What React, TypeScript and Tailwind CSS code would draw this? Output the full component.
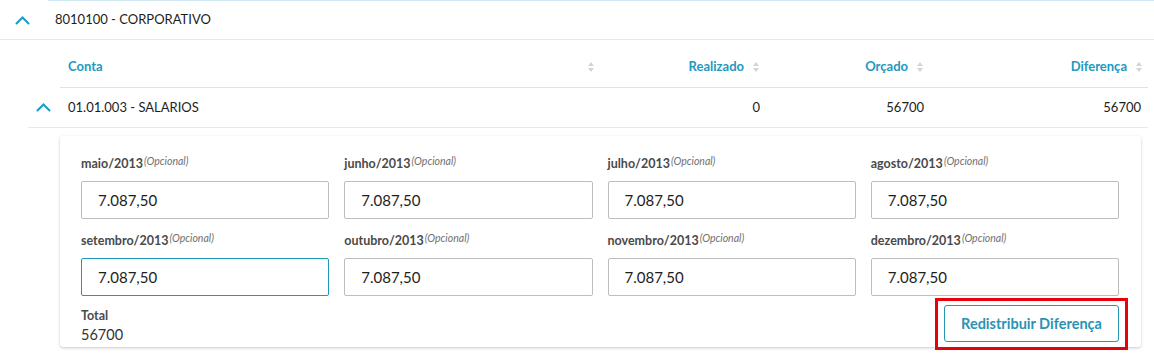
import React from "react";

const Chevron = () => (
  <svg width="15" height="9" viewBox="0 0 15 9" fill="none">
    <path d="M1.5 7.5 L7.5 1.5 L13.5 7.5" stroke="#1a9bc7" strokeWidth="2" strokeLinecap="round" strokeLinejoin="miter" />
  </svg>
);

const Sort = () => (
  <svg width="6" height="10" viewBox="0 0 6 10" className="shrink-0">
    <path d="M3 0 L6 4 L0 4 Z" fill="#d4d4d4" />
    <path d="M3 10 L6 6 L0 6 Z" fill="#d4d4d4" />
  </svg>
);

const months = [
  "maio/2013",
  "junho/2013",
  "julho/2013",
  "agosto/2013",
  "setembro/2013",
  "outubro/2013",
  "novembro/2013",
  "dezembro/2013",
];

export default function App() {
  return (
    <div
      className="w-[1154px] h-[358px] bg-white overflow-hidden text-[#1d1d1d]"
      style={{ fontFamily: "Lato, 'Noto Sans', sans-serif" }}
    >
      <div className="ml-[48px] border-t border-[#cfe8f3]" />
      {/* group row */}
      <div className="h-[39px] flex items-center border-b border-[#e8e8e8]">
        <div className="w-[55px] flex pl-[15px]">
          <Chevron />
        </div>
        <span className="text-[13px]">8010100 - CORPORATIVO</span>
      </div>

      <div className="ml-[28px] mr-[6px]">
        {/* header */}
        <div className="ml-[32px] h-[48px] pt-[6px] grid grid-cols-[540px_162px_164px_222px] items-center border-b border-[#cfe8f3] text-[13px] font-bold text-[#2199c0]">
          <div className="flex items-center justify-between pl-[8px] pr-[6px]">
            <span>Conta</span>
            <Sort />
          </div>
          <div className="flex items-center justify-end gap-[9px] pr-[3px]">
            <span>Realizado</span>
            <Sort />
          </div>
          <div className="flex items-center justify-end gap-[9px] pr-[3px]">
            <span>Orçado</span>
            <Sort />
          </div>
          <div className="flex items-center justify-end gap-[9px] pr-[6px]">
            <span>Diferença</span>
            <Sort />
          </div>
        </div>
        {/* data row */}
        <div className="h-[40px] grid grid-cols-[32px_540px_162px_164px_222px] items-center border-b border-[#e8e8e8] text-[13px]">
          <div className="flex pl-[8px]">
            <Chevron />
          </div>
          <div className="pl-[8px]">01.01.003 - SALARIOS</div>
          <div className="text-right pr-[2px]">0</div>
          <div className="text-right pr-[2px]">56700</div>
          <div className="text-right pr-[7px]">56700</div>
        </div>

        {/* card */}
        <div className="ml-[32px] mr-[7px] mt-[8px] bg-white rounded-[3px] shadow-[0_1px_3px_rgba(0,0,0,0.22)] pt-[18px] pl-[21px] pr-[22px] pb-[5px]">
          <div className="grid grid-cols-4 gap-x-[15px] gap-y-[12px]">
            {months.map((m, i) => (
              <div key={m} className="flex flex-col">
                <div className="h-[20px] mb-[7px] flex items-start leading-[20px]">
                  <span className="text-[12.5px] font-bold text-[#4a4a4a]">{m}</span>
                  <span className="text-[10.5px] italic text-[#707070] leading-[14px] ml-[1px]">(Opcional)</span>
                </div>
                <div
                  className={
                    "h-[38px] flex items-center pl-[16px] text-[15px] rounded-[2px] border " +
                    (i === 4 ? "border-[#2196b9]" : "border-[#bdbdbd]")
                  }
                >
                  7.087,50
                </div>
              </div>
            ))}
          </div>
          <div className="flex justify-between items-end mt-[9px]">
            <div className="flex flex-col mb-[-3px]">
              <span className="text-[12.5px] font-bold text-[#4a4a4a] leading-[18px]">Total</span>
              <span className="text-[14.5px] text-[#333] leading-[20px]">56700</span>
            </div>
            <div className="relative">
              <button className="w-[175px] h-[37px] border border-[#2596b6] rounded-[3px] text-[14.5px] font-bold text-[#2a93b3] bg-white">
                Redistribuir Diferença
              </button>
              <div className="absolute left-[-9px] right-[-9px] top-[-7px] bottom-[-8px] border-[3px] border-[#e8000b] pointer-events-none" />
            </div>
          </div>
        </div>
      </div>
    </div>
  );
}
